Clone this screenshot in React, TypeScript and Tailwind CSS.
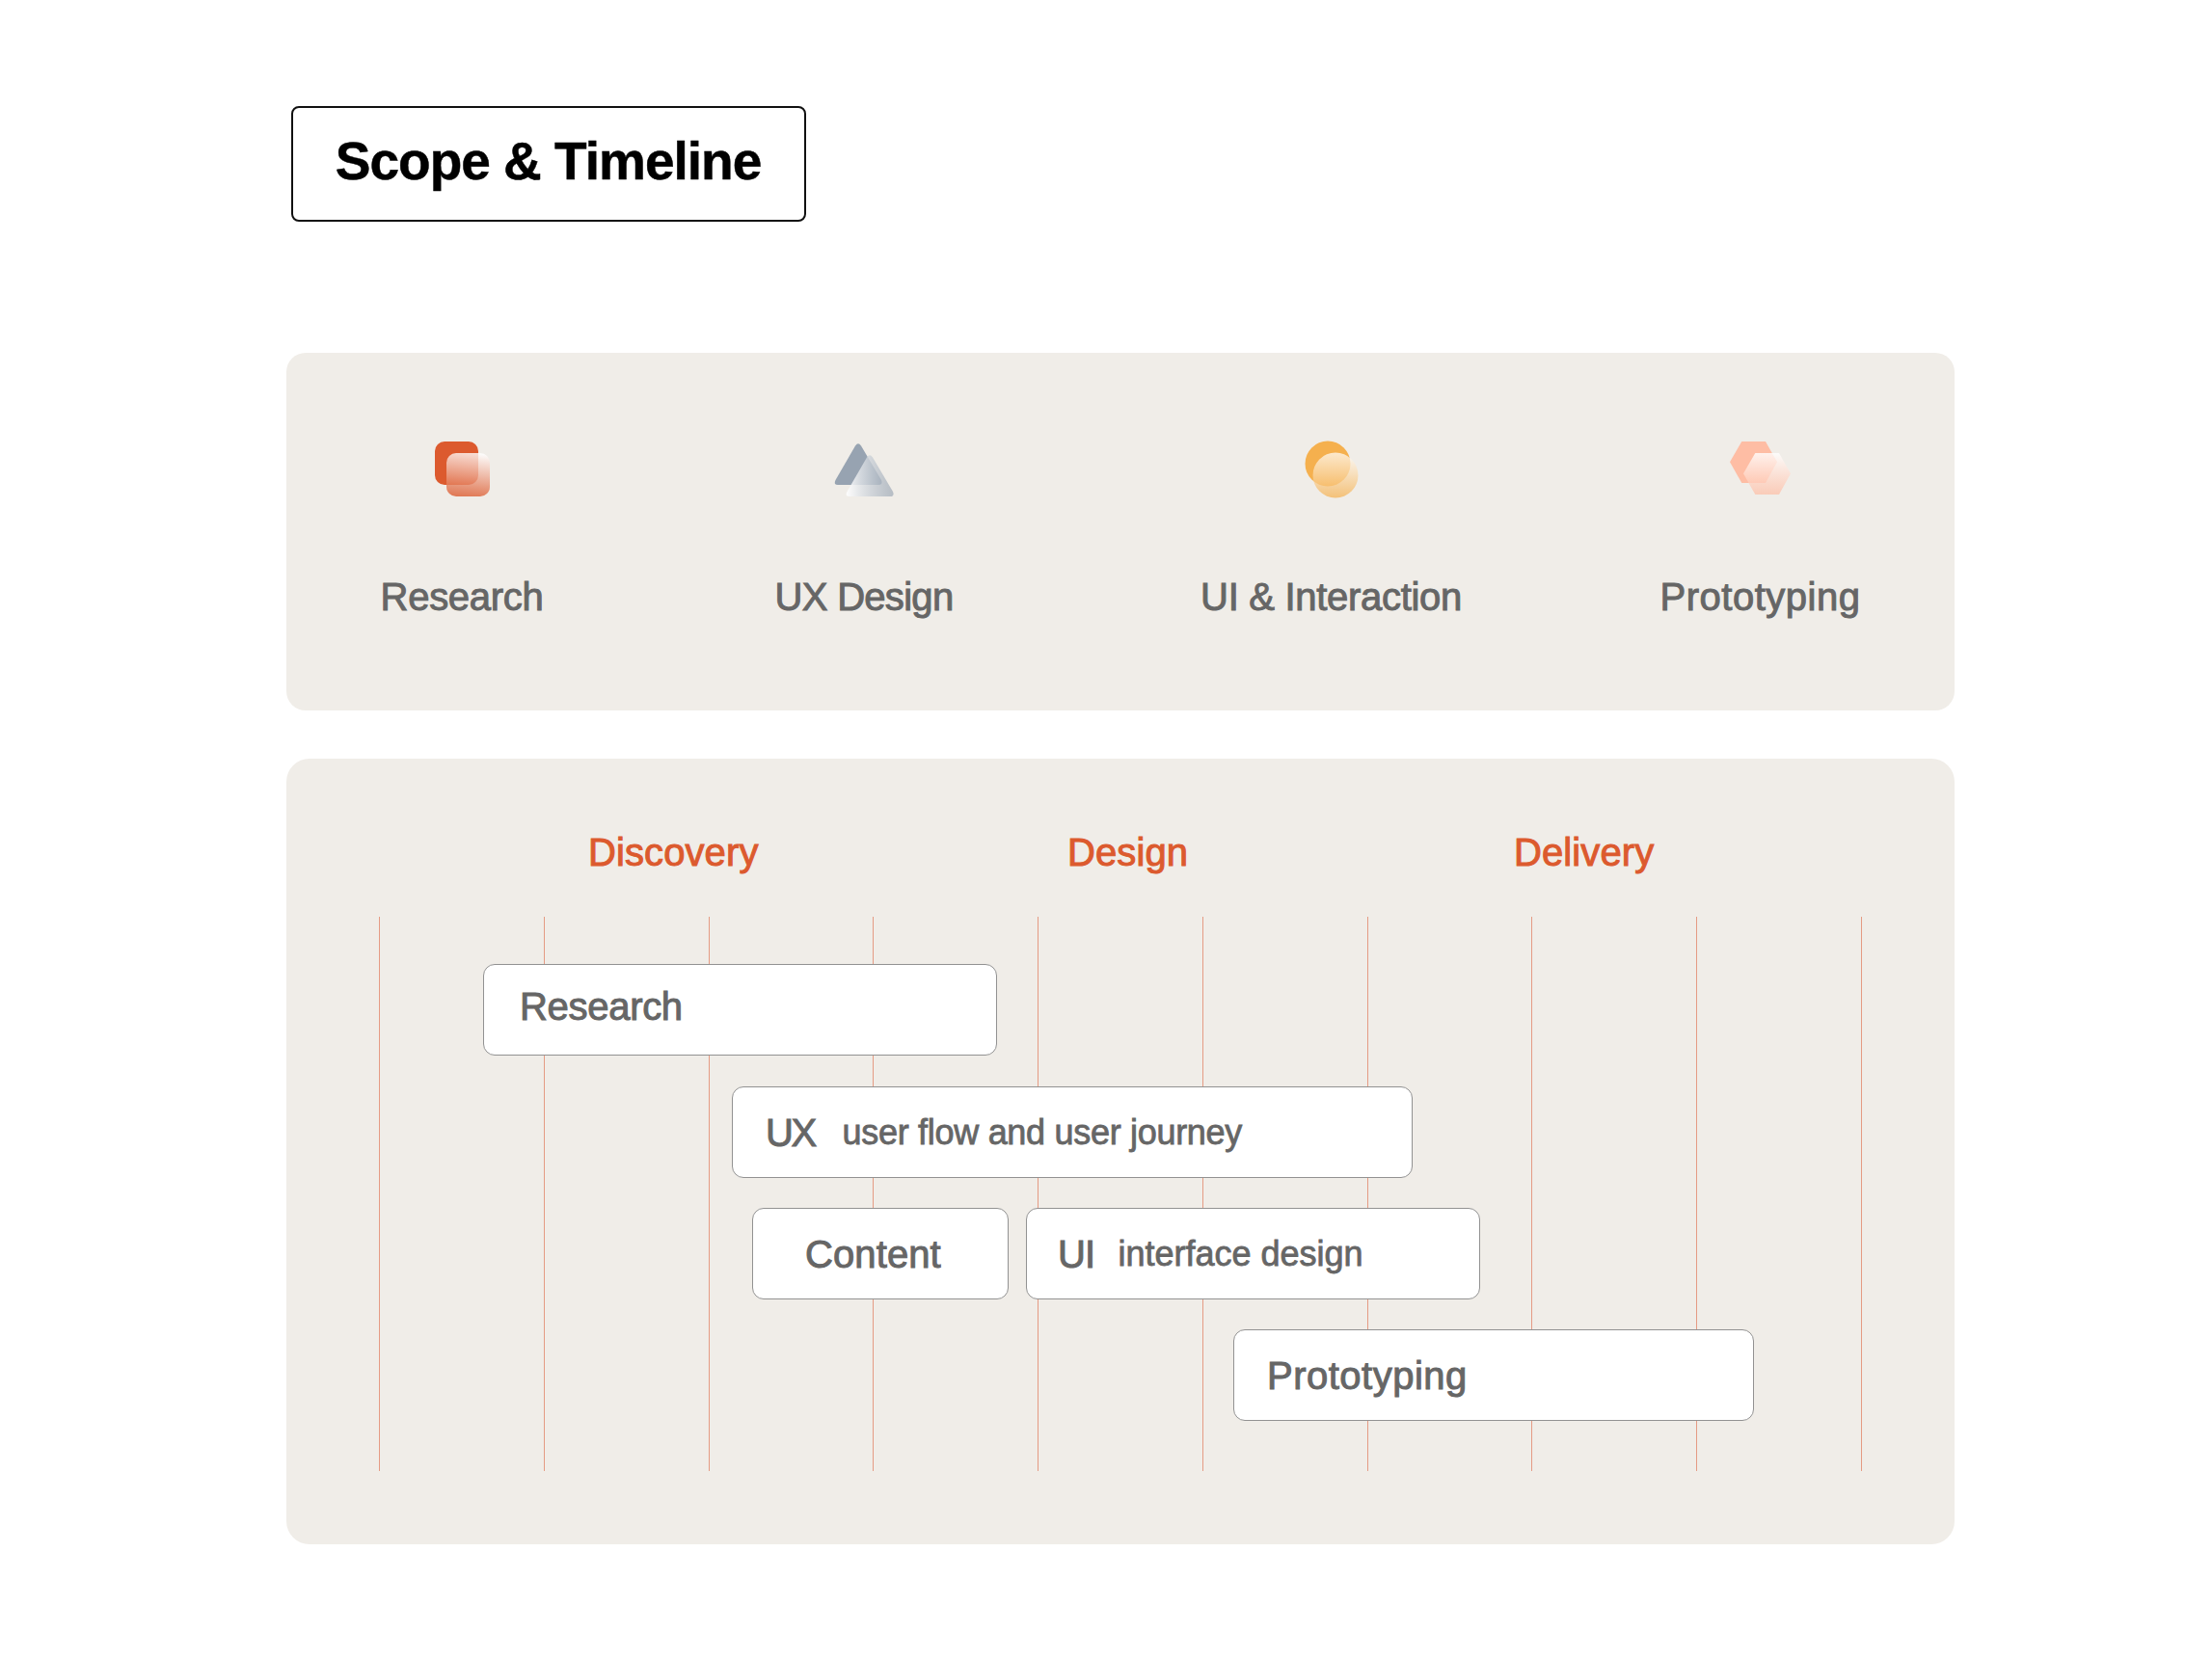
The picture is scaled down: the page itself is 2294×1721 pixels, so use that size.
import React from "react";

const sans = "font-['Liberation_Sans',Arial,sans-serif]";

function ResearchIcon() {
  return (
    <svg width="60" height="60" viewBox="0 0 60 60" className="block">
      <defs>
        <linearGradient id="g1" x1="0.6" y1="0" x2="0.5" y2="1">
          <stop offset="0" stopColor="#ffffff" stopOpacity="0.8" />
          <stop offset="1" stopColor="#dc5a2e" stopOpacity="0.78" />
        </linearGradient>
      </defs>
      <rect x="2" y="2" width="45" height="45" rx="10" fill="#dc5a2e" />
      <rect x="14" y="14" width="45" height="45" rx="10" fill="url(#g1)" />
    </svg>
  );
}

function TriangleIcon() {
  return (
    <svg width="64" height="60" viewBox="0 0 64 60" className="block">
      <defs>
        <linearGradient id="g2" x1="0" y1="0.5" x2="1" y2="0.5">
          <stop offset="0" stopColor="#ffffff" stopOpacity="0.9" />
          <stop offset="1" stopColor="#97a3b1" stopOpacity="0.65" />
        </linearGradient>
      </defs>
      <path d="M21 4.5 Q24 0 27 4.5 L48 40 Q50 45 45 45 L3 45 Q-2 45 0.5 40 Z" fill="#97a3b1" transform="translate(2 2)" />
      <path d="M21 4.5 Q24 0 27 4.5 L48 40 Q50 45 45 45 L3 45 Q-2 45 0.5 40 Z" fill="url(#g2)" transform="translate(14 14)" />
    </svg>
  );
}

function CircleIcon() {
  return (
    <svg width="60" height="62" viewBox="0 0 60 62" className="block">
      <defs>
        <linearGradient id="g3" x1="0.5" y1="0" x2="0.5" y2="1">
          <stop offset="0" stopColor="#ffffff" stopOpacity="0.72" />
          <stop offset="1" stopColor="#f5b04e" stopOpacity="0.72" />
        </linearGradient>
      </defs>
      <circle cx="25" cy="25" r="23.5" fill="#f5b04e" />
      <circle cx="33" cy="37" r="23.5" fill="url(#g3)" />
    </svg>
  );
}

function HexIcon() {
  return (
    <svg width="66" height="60" viewBox="0 0 66 60" className="block">
      <defs>
        <linearGradient id="g4" x1="0.5" y1="0" x2="0.5" y2="1">
          <stop offset="0" stopColor="#ffffff" stopOpacity="0.8" />
          <stop offset="1" stopColor="#febda4" stopOpacity="0.7" />
        </linearGradient>
      </defs>
      <path d="M14.3 2 L39 2 L51 23.3 L39 45 L14.3 45 L2 23.3 Z" fill="#febda4" />
      <path d="M14.3 2 L39 2 L51 23.3 L39 45 L14.3 45 L2 23.3 Z" fill="url(#g4)" transform="translate(14 12)" />
    </svg>
  );
}

function Bar({ className, children }: { className: string; children: React.ReactNode }) {
  return (
    <div className={`h-[95px] shrink-0 rounded-[12px] border border-[#929292] bg-white flex items-center text-[#666666] ${className}`}>
      {children}
    </div>
  );
}

const heavy = "[-webkit-text-stroke:1px]";

export default function App() {
  const lines = Array.from({ length: 10 });
  return (
    <div className={`w-[2294px] h-[1721px] bg-white pl-[297px] pt-[110px] ${sans}`}>
      <div className="ml-[5px] w-[534px] h-[120px] pb-[5px] rounded-[8px] border-2 border-[#111111] flex items-center justify-center">
        <span className="mr-[1px] text-[55px] font-bold tracking-[-1px] text-black leading-none [-webkit-text-stroke:0.5px]">Scope &amp; Timeline</span>
      </div>

      <div className={`mt-[136px] w-[1730px] h-[371px] rounded-[20px] bg-[#f0ede8] pt-[90px] flex text-[40px] leading-[46px] text-[#666666] ${heavy}`}>
        <div className="ml-[98px] w-[168px] flex flex-col items-center">
          <div className="h-[140px]"><div className="mr-[1px]"><ResearchIcon /></div></div>
          <span className="whitespace-nowrap tracking-[-0.3px]">Research</span>
        </div>
        <div className="ml-[240px] w-[186px] flex flex-col items-center">
          <div className="h-[140px]"><TriangleIcon /></div>
          <span className="whitespace-nowrap tracking-[-0.7px]">UX Design</span>
        </div>
        <div className="ml-[256px] w-[271px] flex flex-col items-center">
          <div className="h-[140px]"><div className="ml-[2px]"><CircleIcon /></div></div>
          <span className="whitespace-nowrap tracking-[-0.3px]">UI &amp; Interaction</span>
        </div>
        <div className="ml-[206px] w-[207px] flex flex-col items-center">
          <div className="h-[140px]"><div className="mr-[1px]"><HexIcon /></div></div>
          <span className="whitespace-nowrap tracking-[0.5px]">Prototyping</span>
        </div>
      </div>

      <div className="mt-[50px] w-[1730px] h-[815px] rounded-[24px] bg-[#f0ede8] pl-[96px] pt-[74px]">
        <div className={`flex h-[46px] text-[40px] leading-[46px] tracking-[0.1px] text-[#dc5a2e] ${heavy}`}>
          <span className="ml-[217px] w-[176px] whitespace-nowrap">Discovery</span>
          <span className="ml-[321px] w-[126px] whitespace-nowrap">Design</span>
          <span className="ml-[337px] w-[145px] whitespace-nowrap">Delivery</span>
        </div>
        <div className="relative mt-[44px] w-[1538px] h-[575px] pt-[49px] flex flex-col gap-[31px]">
          <div className="absolute inset-0 flex justify-between">
            {lines.map((_, i) => (
              <div key={i} className="w-px h-full bg-[#e59b84]" />
            ))}
          </div>
          <Bar className="relative ml-[108px] w-[533px] pl-[37px] pb-[8px]">
            <span className={`text-[40px] tracking-[-0.3px] ${heavy}`}>Research</span>
          </Bar>
          <Bar className="relative mt-[1px] ml-[366px] w-[706px] pl-[34px]">
            <span className={`text-[40px] tracking-[-2.5px] ${heavy}`}>UX</span>
            <span className="ml-[29px] text-[36px] tracking-[-0.3px] [-webkit-text-stroke:0.8px] whitespace-nowrap">user flow and user journey</span>
          </Bar>
          <div className="relative flex gap-[18px]">
            <Bar className="ml-[387px] w-[266px] pl-[54px]">
              <span className={`text-[40px] tracking-[0.1px] ${heavy}`}>Content</span>
            </Bar>
            <Bar className="w-[471px] pl-[32px]">
              <span className={`text-[40px] tracking-[-0.8px] ${heavy}`}>UI</span>
              <span className="ml-[24px] text-[36px] tracking-[0px] [-webkit-text-stroke:0.8px] whitespace-nowrap">interface design</span>
            </Bar>
          </div>
          <Bar className="relative ml-[886px] w-[540px] pl-[34px] pt-[1px]">
            <span className={`text-[40px] tracking-[0.5px] ${heavy}`}>Prototyping</span>
          </Bar>
        </div>
      </div>
    </div>
  );
}
